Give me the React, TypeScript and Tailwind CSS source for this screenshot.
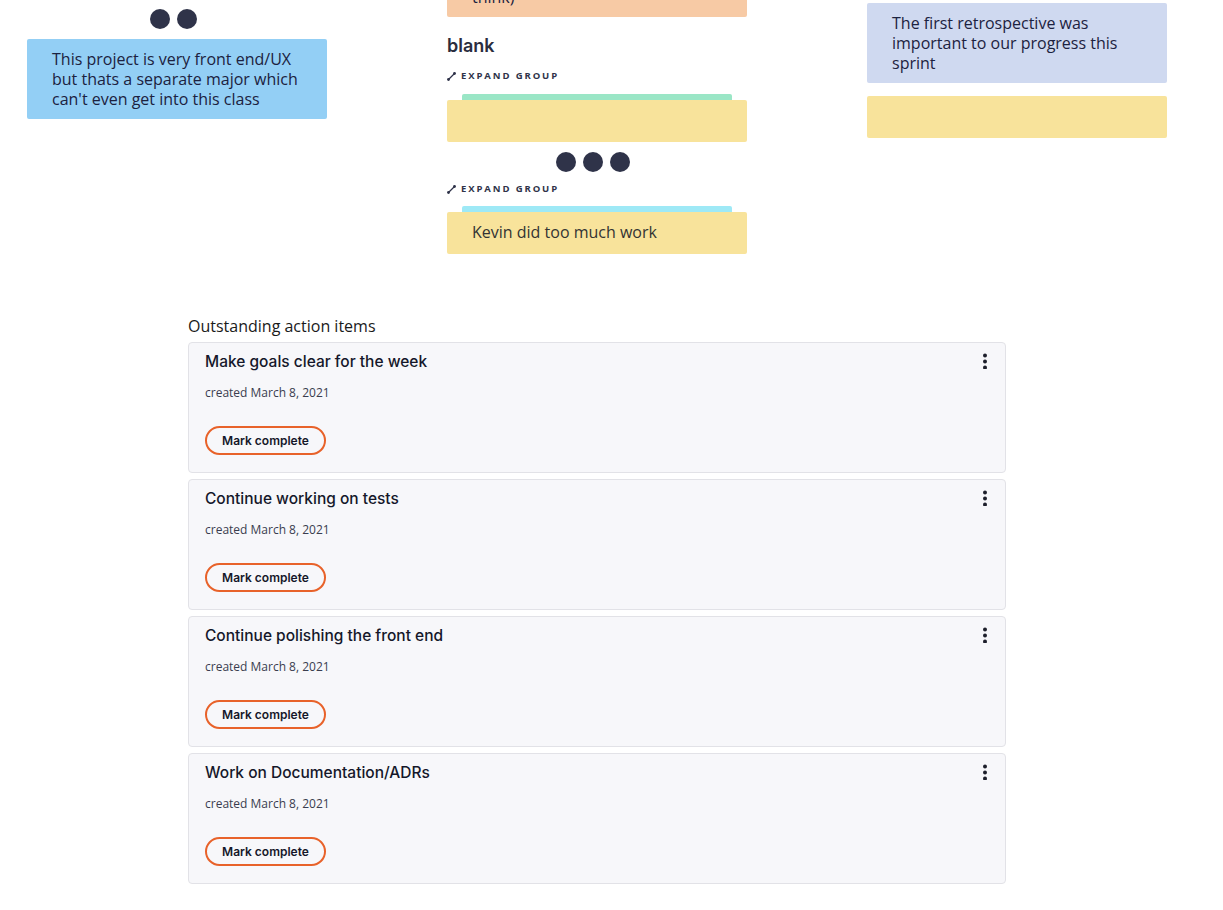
const actionItems = [
  "Make goals clear for the week",
  "Continue working on tests",
  "Continue polishing the front end",
  "Work on Documentation/ADRs",
];

const Dots = ({ count }: { count: number }) => (
  <div className="flex justify-center gap-[7px] pr-[8px]">
    {Array.from({ length: count }).map((_, i) => (
      <span key={i} className="block h-5 w-5 rounded-full bg-[#2f3349]" />
    ))}
  </div>
);

const ExpandGroup = () => (
  <div className="flex items-center gap-[5px] text-[9.5px] font-bold leading-3 tracking-[0.2em] text-[#2f3349]">
    <svg width="9" height="9" viewBox="0 0 9 9" fill="none">
      <path d="M1 8 L8 1" stroke="#2f3349" strokeWidth="1.3" />
      <circle cx="1.5" cy="7.5" r="1.4" fill="#2f3349" />
      <circle cx="7.5" cy="1.5" r="1.4" fill="#2f3349" />
    </svg>
    <span>EXPAND GROUP</span>
  </div>
);

const Note = ({ color, children, h }: { color: string; children?: React.ReactNode; h?: string }) => (
  <div className={`rounded-[2px] px-[25px] py-[10px] text-[16px] leading-[20px] text-[#1c2240] ${color} ${h ?? ""}`}>
    {children}
  </div>
);

const ActionCard = ({ title }: { title: string }) => (
  <div className="relative flex h-[131px] flex-col rounded-[4px] border border-[#e2e2e7] bg-[#f7f7fa] px-4 pt-[9px] font-['Inter',sans-serif]">
    <div className="text-[15.5px] font-medium leading-5 text-[#15172a]">{title}</div>
    <div className="mt-[13px] font-['Open_Sans',sans-serif] text-[12px] leading-4 text-[#3a3d4f]">
      created March 8, 2021
    </div>
    <div className="mt-[25px]">
      <button className="h-[29px] w-[121px] rounded-full border-2 border-[#e8622a] text-[12px] font-semibold leading-none text-[#15172a]">
        Mark complete
      </button>
    </div>
    <svg className="absolute right-[17px] top-[10px]" width="6" height="16" viewBox="0 0 6 16">
      <circle cx="3" cy="2.5" r="2" fill="#1d1f2b" />
      <circle cx="3" cy="8.5" r="2" fill="#1d1f2b" />
      <circle cx="3" cy="14.5" r="2" fill="#1d1f2b" />
    </svg>
  </div>
);

export default function App() {
  return (
    <div className="h-[910px] w-full overflow-hidden bg-white font-['Open_Sans',sans-serif]">
      <div className="flex gap-[120px] pl-[27px]">
        <div className="flex w-[300px] flex-col pt-[9px]">
          <Dots count={2} />
          <div className="mt-[10px]">
            <Note color="bg-[#93cff5]">
              This project is very front end/UX but thats a separate major which can't even get into this class
            </Note>
          </div>
        </div>

        <div className="flex w-[300px] flex-col">
          <div className="h-[17px] overflow-hidden rounded-b-[2px] bg-[#f7caa5] px-[25px]">
            <div className="-mt-[13px] text-[16px] leading-[20px] text-[#1c2240]">think)</div>
          </div>
          <h2 className="mt-[18px] font-['Inter',sans-serif] text-[18px] font-semibold leading-[22px] text-[#2a2d3e]">blank</h2>
          <div className="mt-[13px]">
            <ExpandGroup />
          </div>
          <div className="mt-[12px]">
            <div className="mx-[15px] h-[6px] rounded-t-[2px] bg-[#9ae6c6]" />
            <Note color="bg-[#f8e39b]" h="h-[42px]" />
          </div>
          <div className="mt-[10px]">
            <Dots count={3} />
          </div>
          <div className="mt-[11px]">
            <ExpandGroup />
          </div>
          <div className="mt-[11px]">
            <div className="mx-[15px] h-[6px] rounded-t-[2px] bg-[#9ee9f6]" />
            <Note color="bg-[#f8e39b]" h="h-[42px]">
              <span className="text-[#333333]">Kevin did too much work</span>
            </Note>
          </div>
        </div>

        <div className="flex w-[300px] flex-col pt-[3px]">
          <Note color="bg-[#cfd9f0]">
            The first retrospective was important to our progress this sprint
          </Note>
          <div className="mt-[13px]">
            <Note color="bg-[#f8e39b]" h="h-[42px]" />
          </div>
        </div>
      </div>

      <div className="ml-[188px] mt-[61px] w-[818px]">
        <div className="mb-[5px] text-[16px] leading-[22px] text-[#1a1a1a]">Outstanding action items</div>
        <div className="flex flex-col gap-[6px]">
          {actionItems.map((t) => (
            <ActionCard key={t} title={t} />
          ))}
        </div>
      </div>
    </div>
  );
}
